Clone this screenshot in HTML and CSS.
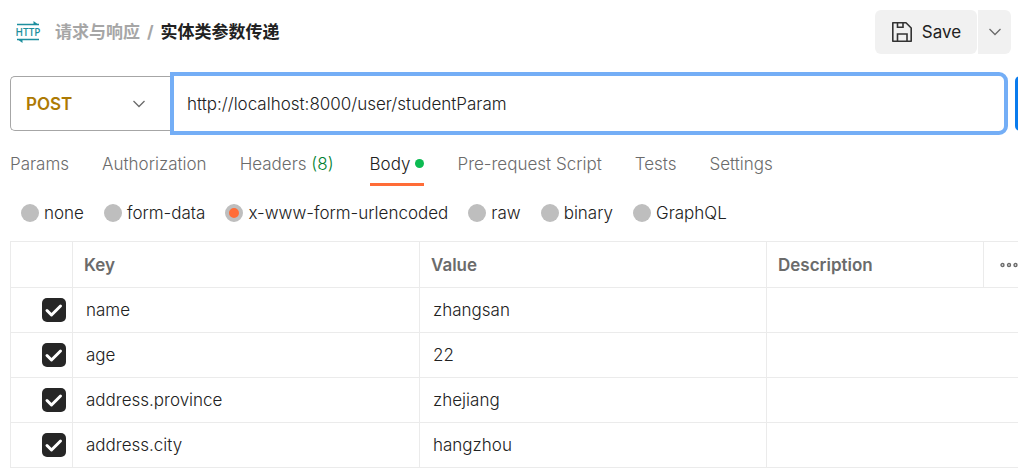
FILE: index.html
```html
<!DOCTYPE html>
<html lang="zh-CN">
<head>
<meta charset="utf-8">
<meta name="viewport" content="width=device-width, initial-scale=1">
<title>实体类参数传递</title>
<link rel="stylesheet" href="styles.css">
</head>
<body>
<header class="topbar">
  <svg class="http-icon" width="24" height="24" viewBox="0 0 24 24" aria-hidden="true">
    <path d="M1 4.500H23M1 19.500H23" fill="none" stroke="#1d8f9e" stroke-width="1.300"/>
    <path d="M17.500 1L22.500 4.800H17.500ZM6.500 23L1.500 19.200H6.500Z" fill="#1d8f9e"/>
    <text class="http-label" x="12" y="16" text-anchor="middle">HTTP</text>
  </svg>
  <nav class="crumbs">
    <a class="crumb-parent" href="#">请求与响应</a>
    <span class="crumb-sep">/</span>
    <span class="crumb-current">实体类参数传递</span>
  </nav>
  <div class="save-group">
    <button class="save-button" type="button">
      <svg width="22" height="22" viewBox="0 0 22 22" fill="none" stroke="#333" stroke-width="1.600" aria-hidden="true">
        <path d="M1.800 1.800H15L20.200 7V20.200H1.800Z" stroke-linejoin="round"/>
        <path d="M6.500 2V6.200H12V2M6.500 20V13H16V20"/>
      </svg>
      <span>Save</span>
    </button>
    <button class="save-more" type="button" aria-label="More save options">
      <svg width="14" height="8" viewBox="0 0 14 8" fill="none" stroke="#6b6b6b" stroke-width="1.300" aria-hidden="true"><path d="M1.500 1L7 6.500L12.500 1"/></svg>
    </button>
  </div>
</header>

<form class="request">
  <div class="method">
    <select class="method-select" aria-label="Method"><option>POST</option><option>GET</option></select>
    <svg class="method-arrow" width="14" height="8" viewBox="0 0 14 8" fill="none" stroke="#6b6b6b" stroke-width="1.300" aria-hidden="true"><path d="M1.500 1L7 6.500L12.500 1"/></svg>
  </div>
  <input class="url" type="text" aria-label="Request URL" value="http://localhost:8000/user/studentParam">
  <button class="send" type="button" aria-label="Send"></button>
</form>

<nav class="tabs">
  <a class="tab" href="#">Params</a>
  <a class="tab" href="#">Authorization</a>
  <a class="tab" href="#">Headers <span class="count">(8)</span></a>
  <a class="tab tab-active" href="#">Body<span class="dot"></span></a>
  <a class="tab" href="#">Pre-request Script</a>
  <a class="tab" href="#">Tests</a>
  <a class="tab" href="#">Settings</a>
</nav>

<div class="modes" role="radiogroup" aria-label="Body type">
  <label class="mode"><input type="radio" name="mode">none</label>
  <label class="mode"><input type="radio" name="mode">form-data</label>
  <label class="mode"><input type="radio" name="mode" checked>x-www-form-urlencoded</label>
  <label class="mode"><input type="radio" name="mode">raw</label>
  <label class="mode"><input type="radio" name="mode">binary</label>
  <label class="mode"><input type="radio" name="mode">GraphQL</label>
</div>

<div class="table-wrap">
  <table class="params">
    <colgroup><col class="col-check"><col class="col-key"><col class="col-value"><col><col class="col-more"></colgroup>
    <thead>
      <tr>
        <th></th><th>Key</th><th>Value</th><th>Description</th>
        <th class="more">
          <svg width="18" height="6" viewBox="0 0 18 6" fill="none" stroke="#6b6b6b" stroke-width="1.400" aria-label="More"><circle cx="2.500" cy="3" r="1.500"/><circle cx="9" cy="3" r="1.500"/><circle cx="15.500" cy="3" r="1.500"/></svg>
        </th>
      </tr>
    </thead>
    <tbody>
      <tr><td class="check"><label class="box"><input type="checkbox" checked aria-label="name"><svg viewBox="0 0 24 24" aria-hidden="true"><path d="M5 12.500L9.500 17L18.500 8"/></svg></label></td><td>name</td><td>zhangsan</td><td colspan="2"></td></tr>
      <tr><td class="check"><label class="box"><input type="checkbox" checked aria-label="age"><svg viewBox="0 0 24 24" aria-hidden="true"><path d="M5 12.500L9.500 17L18.500 8"/></svg></label></td><td>age</td><td>22</td><td colspan="2"></td></tr>
      <tr><td class="check"><label class="box"><input type="checkbox" checked aria-label="address.province"><svg viewBox="0 0 24 24" aria-hidden="true"><path d="M5 12.500L9.500 17L18.500 8"/></svg></label></td><td>address.province</td><td>zhejiang</td><td colspan="2"></td></tr>
      <tr><td class="check"><label class="box"><input type="checkbox" checked aria-label="address.city"><svg viewBox="0 0 24 24" aria-hidden="true"><path d="M5 12.500L9.500 17L18.500 8"/></svg></label></td><td>address.city</td><td>hangzhou</td><td colspan="2"></td></tr>
    </tbody>
  </table>
</div>
</body>
</html>
```

FILE: styles.css
```css
* { box-sizing: border-box; }
body {
  margin: 0;
  overflow-x: hidden;
  background: #fff;
  color: #212121;
  font: 300 17px/24px Inter, "Noto Sans CJK SC", sans-serif;
}
button, input, select { font: inherit; color: inherit; margin: 0; }
a { color: inherit; text-decoration: none; }
svg { display: block; flex: none; }

.topbar { display: flex; align-items: center; padding: 10px 7px 18px 16px; }
.http-icon { overflow: visible; }
.http-label { font: 600 10px "Open Sans", sans-serif; fill: #1d8f9e; }
.crumbs { display: flex; gap: 7px; margin-left: 15px; font-weight: 700; }
.crumb-parent, .crumb-sep { color: #a6a6a6; }
.save-group { display: flex; gap: 1px; height: 44px; margin-left: auto; }
.save-button, .save-more { display: flex; align-items: center; justify-content: center; border: 0; background: #f1f1f1; }
.save-button { gap: 9px; width: 102px; padding: 0; border-radius: 6px; font-weight: 400; }
.save-more { width: 33px; padding: 0; border-radius: 0 6px 6px 0; }

.request { display: flex; align-items: center; padding-left: 10px; overflow: hidden; }
.method { position: relative; width: 160px; }
.method-select {
  display: block;
  width: 100%;
  height: 55px;
  padding: 0 15px;
  border: 1px solid #a6a6a6;
  border-right: 0;
  border-radius: 5px 0 0 5px;
  background: #fff;
  color: #ad7a03;
  font-weight: 600;
  appearance: none;
}
.method-arrow { position: absolute; right: 24px; top: 24px; pointer-events: none; }
.url {
  flex: 1;
  min-width: 0;
  height: 63px;
  padding: 0 13px;
  border: 4px solid #74aef6;
  border-radius: 0 9px 9px 0;
  outline: 0;
  background: #fff;
}
.send { flex: none; width: 100px; height: 55px; margin: 0 -97px 0 7px; border: 0; border-radius: 5px; background: #097bed; }

.tabs { display: flex; gap: 33px; padding: 17px 10px 0; color: #6b6b6b; white-space: nowrap; }
.tab { height: 34px; }
.count { margin-right: 3px; color: #007f31; }
.tab-active { display: flex; gap: 5px; color: #212121; border-bottom: 3px solid #ff6c37; }
.dot { width: 9px; height: 9px; margin-top: 7px; border-radius: 50%; background: #0cbb52; }

.modes { display: flex; gap: 20px; padding: 15px 21px 16px; white-space: nowrap; }
.mode { display: flex; align-items: center; gap: 5px; }
.mode input { appearance: none; width: 18px; height: 18px; border-radius: 50%; background: #bebebe; }
.mode input:checked { border: 4px solid #bebebe; background: #ff6c37; }

.table-wrap { padding-left: 10px; }
.params { width: 100%; table-layout: fixed; border-collapse: collapse; }
.col-check { width: 62px; }
.col-key, .col-value { width: 347px; }
.col-more { width: 35px; }
.params th, .params td { height: 45px; padding: 0 11px; border: 1px solid #ebebeb; text-align: left; }
.params th { height: 46px; color: #6b6b6b; font-weight: 600; }
.params td { padding: 0 13px; }
.params tr > :last-child { border-right: 0; }
.params .more { padding: 0 0 0 16px; }
.params .check { padding: 0 0 0 31px; }
.box { display: block; position: relative; width: 24px; height: 24px; }
.box input { appearance: none; display: block; width: 24px; height: 24px; border-radius: 5px; background: #262626; }
.box svg { position: absolute; inset: 0; fill: none; stroke: #fff; stroke-width: 3; stroke-linecap: round; stroke-linejoin: round; }
```
